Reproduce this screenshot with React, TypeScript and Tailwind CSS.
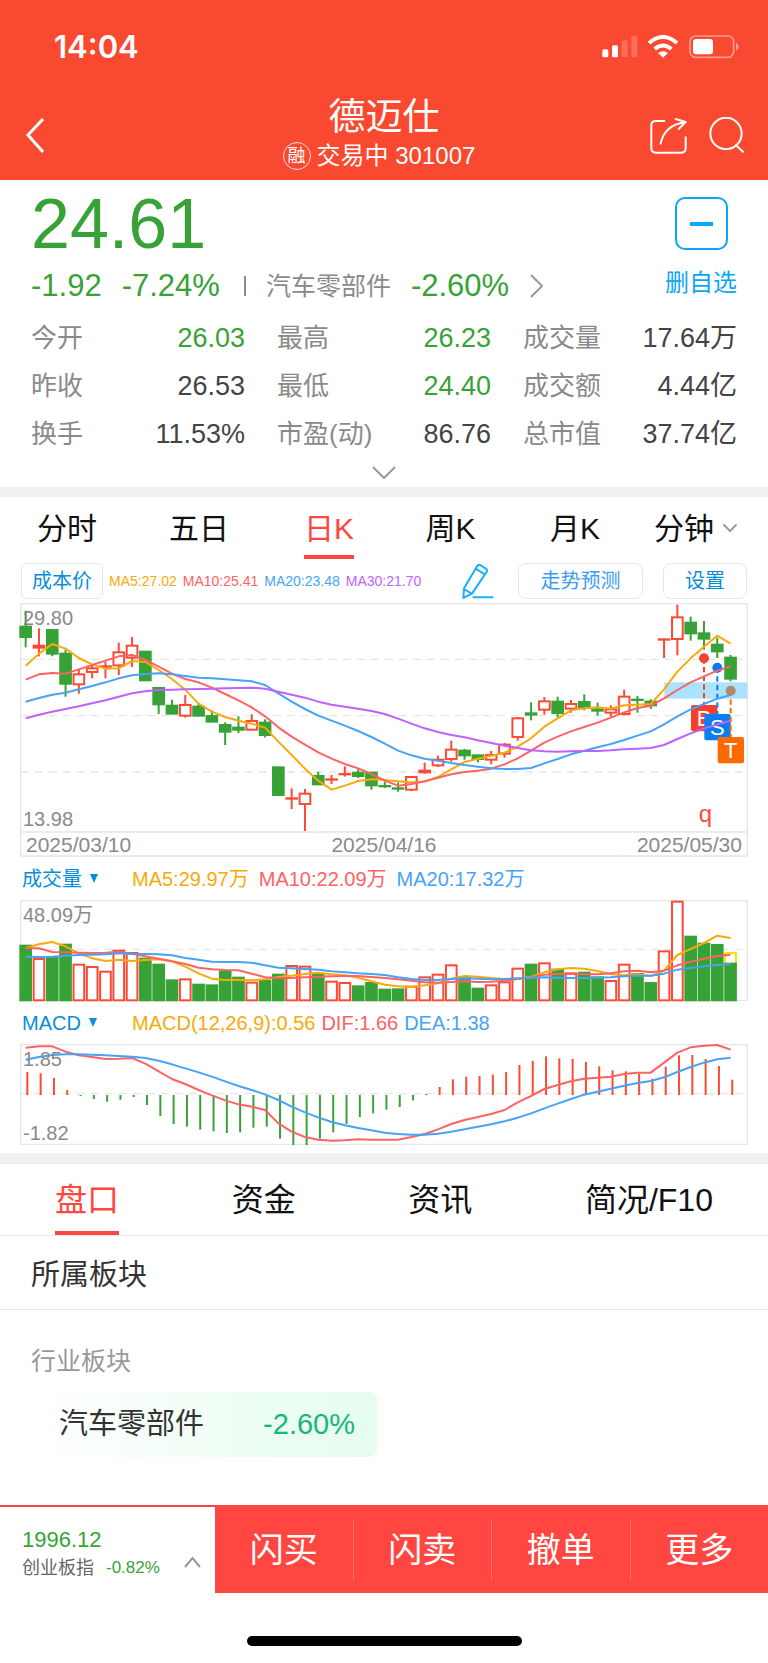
import { ChevronDown } from "lucide-react";

type Candle = ["r" | "g", number, number, number, number];

const RED = "#fb4a35";
const GREEN = "#37a337";
const ORANGE = "#f9a90b";
const PINK = "#ff6262";
const BLUE = "#46a3f8";
const PURPLE = "#bd62ff";

//direction, wick top, body top, body bottom, wick bottom
const candles: Candle[] = [
  ["g", 47, 93, 128, 157], ["r", 100, 150, 160, 184], ["g", 103, 103, 178, 184],
  ["g", 164, 174, 268, 305], ["r", 225, 236, 270, 296], ["r", 213, 218, 233, 250],
  ["r", 200, 212, 216, 250], ["r", 143, 170, 213, 240], ["r", 126, 150, 190, 216],
  ["g", 168, 168, 258, 258], ["g", 277, 277, 330, 357], ["g", 314, 330, 358, 358],
  ["r", 300, 328, 364, 368], ["g", 325, 333, 364, 364], ["g", 346, 361, 382, 382],
  ["g", 382, 388, 412, 450], ["g", 364, 396, 406, 414], ["r", 358, 376, 406, 406],
  ["g", 373, 381, 422, 427], ["g", 515, 515, 602, 602], ["r", 580, 608, 611, 642],
  ["r", 582, 594, 629, 708], ["g", 530, 541, 570, 570], ["r", 540, 551, 555, 567],
  ["r", 514, 535, 538, 545], ["g", 521, 531, 545, 549], ["g", 531, 531, 573, 584],
  ["g", 560, 571, 576, 579], ["g", 562, 578, 583, 590], ["r", 544, 544, 586, 588],
  ["r", 503, 525, 534, 536], ["r", 482, 492, 513, 516], ["r", 437, 462, 494, 500],
  ["g", 462, 465, 483, 494], ["g", 478, 479, 494, 502], ["r", 468, 478, 496, 508],
  ["r", 444, 447, 478, 488], ["r", 366, 368, 428, 437], ["g", 322, 353, 361, 376],
  ["r", 306, 317, 346, 359], ["g", 305, 318, 356, 367], ["r", 315, 325, 343, 353],
  ["g", 298, 319, 341, 346], ["g", 323, 341, 349, 362], ["r", 331, 341, 355, 365],
  ["r", 284, 303, 359, 361], ["g", 303, 312, 316, 353], ["g", 313, 318, 333, 342],
  ["r", 131, 131, 135, 189], ["r", 29, 65, 134, 181], ["g", 65, 81, 117, 137],
  ["g", 78, 113, 133, 164], ["g", 128, 147, 171, 189], ["g", 180, 186, 253, 259],
];

const ma5 = [212, 176, 147, 161, 189, 208, 221, 220, 198, 201, 225, 252, 284, 326, 350, 366, 377, 386, 398, 440, 480, 521, 557, 584, 572, 558, 553, 555, 559, 562, 560, 546, 523, 501, 491, 482, 473, 455, 430, 395, 370, 346, 340, 337, 341, 331, 329, 327, 283, 230, 190, 155, 122, 146];
const ma10 = [254, 238, 234, 236, 223, 210, 197, 184, 180, 195, 215, 236, 252, 262, 278, 297, 316, 337, 364, 397, 425, 449, 472, 491, 507, 520, 537, 557, 572, 567, 559, 548, 538, 531, 527, 521, 508, 490, 467, 443, 425, 409, 396, 383, 368, 352, 339, 332, 310, 285, 262, 244, 227, 215];
const ma20 = [320, 309, 299, 293, 283, 273, 262, 250, 241, 237, 235, 238, 243, 248, 250, 253, 256, 259, 270, 295, 320, 342, 362, 377, 392, 408, 426, 446, 467, 481, 491, 497, 504, 510, 515, 520, 522, 522, 519, 505, 492, 478, 467, 457, 447, 435, 422, 409, 388, 364, 343, 327, 311, 300];
const ma30 = [370, 359, 350, 342, 334, 325, 316, 305, 295, 289, 285, 284, 283, 282, 281, 280, 279, 278, 281, 290, 299, 308, 320, 329, 335, 341, 348, 357, 371, 386, 400, 411, 420, 427, 436, 444, 452, 459, 466, 469, 470, 469, 468, 468, 466, 463, 461, 459, 450, 432, 415, 401, 388, 377];

const volumes = [255, 295, 290, 252, 312, 319, 333, 270, 277, 294, 312, 359, 356, 372, 374, 333, 351, 366, 360, 342, 316, 318, 340, 363, 367, 377, 367, 387, 386, 378, 350, 342, 314, 352, 384, 374, 365, 324, 312, 308, 327, 338, 336, 350, 361, 312, 340, 367, 272, 123, 228, 249, 253, 309];
const vol5 = [264, 253, 246, 259, 280, 295, 303, 299, 303, 300, 298, 304, 320, 340, 356, 360, 359, 361, 358, 351, 347, 342, 338, 343, 346, 353, 364, 374, 379, 381, 376, 370, 356, 348, 350, 354, 357, 357, 350, 337, 328, 324, 326, 333, 343, 346, 343, 348, 332, 285, 267, 249, 227, 234];
const vol10 = [265, 265, 276, 277, 278, 279, 278, 275, 281, 289, 296, 304, 312, 323, 328, 330, 331, 341, 352, 354, 354, 352, 350, 349, 348, 348, 351, 354, 358, 362, 367, 368, 366, 364, 366, 365, 362, 357, 352, 344, 341, 342, 343, 343, 340, 334, 332, 337, 332, 316, 305, 296, 288, 284];
const vol20 = [290, 291, 290, 287, 285, 284, 283, 280, 282, 282, 283, 286, 294, 299, 305, 306, 306, 308, 316, 323, 325, 327, 329, 334, 337, 340, 342, 345, 352, 357, 360, 360, 357, 355, 356, 358, 357, 355, 353, 352, 353, 354, 354, 353, 352, 349, 347, 347, 341, 329, 324, 319, 315, 313];

const macd = [636, 640, 654, 690, 708, 717, 725, 719, 711, 735, 768, 792, 800, 809, 814, 819, 817, 803, 800, 836, 855, 855, 836, 817, 792, 771, 760, 749, 741, 721, 702, 681, 658, 650, 648, 644, 636, 615, 603, 589, 595, 597, 606, 619, 631, 634, 642, 656, 620, 586, 585, 597, 618, 659];
const dif = [563, 559, 559, 575, 586, 591, 597, 596, 594, 611, 634, 657, 672, 690, 706, 721, 733, 740, 750, 790, 815, 831, 839, 842, 841, 838, 839, 839, 839, 831, 822, 808, 792, 780, 771, 762, 750, 727, 708, 687, 675, 664, 656, 653, 650, 642, 638, 638, 608, 578, 562, 557, 555, 569];
const dea = [599, 591, 585, 583, 583, 584, 586, 588, 590, 594, 602, 613, 625, 637, 650, 664, 678, 690, 703, 720, 740, 757, 772, 786, 796, 804, 811, 818, 822, 824, 824, 821, 815, 808, 800, 793, 784, 773, 760, 745, 731, 717, 704, 695, 686, 677, 669, 663, 652, 636, 621, 608, 598, 593];

const stats = [
  { label: "今开", value: "26.03", down: true },
  { label: "最高", value: "26.23", down: true },
  { label: "成交量", value: "17.64万", down: false },
  { label: "昨收", value: "26.53", down: false },
  { label: "最低", value: "24.40", down: true },
  { label: "成交额", value: "4.44亿", down: false },
  { label: "换手", value: "11.53%", down: false },
  { label: "市盈(动)", value: "86.76", down: false },
  { label: "总市值", value: "37.74亿", down: false },
];

const periods = ["分时", "五日", "日K", "周K", "月K", "分钟"];
const sections = ["盘口", "资金", "资讯", "简况/F10"];
const actions = ["闪买", "闪卖", "撤单", "更多"];

const cx = (i: number) => 77 + i * 39.9;

function Line({ data, color }: { data: number[]; color: string }) {
  return (
    <polyline
      points={data.map((y, i) => `${cx(i)},${y}`).join(" ")}
      fill="none"
      stroke={color}
      strokeWidth={6}
      strokeLinejoin="round"
    />
  );
}

function Grid({ y }: { y: number }) {
  return <path d={`M62 ${y}H2242`} stroke="#e6e6e6" strokeWidth={4} strokeDasharray="24 18" />;
}

function Marker({ x, dot, top, color, dotColor, letter }: { x: number; dot: number; top: number; color: string; dotColor: string; letter: string }) {
  return (
    <g>
      <path d={`M${x} ${dot}V${top}`} stroke={color} strokeWidth={6} strokeDasharray="16 10" />
      <circle cx={x} cy={dot} r={15} fill={dotColor} />
      <rect x={x - 39} y={top} width={79} height={79} rx={6} fill={color} />
      <text x={x} y={top + 62} fontSize={66} textAnchor="middle" fill="#fff">
        {letter}
      </text>
    </g>
  );
}

function PriceChart() {
  return (
    <div className="relative mx-5 text-xl leading-6 text-[#8a8a8a]">
      <svg viewBox="60 24 2184 762" className="block w-full overflow-visible">
        <path d="M62 26H2242V783H62ZM62 711H2242" fill="none" stroke="#e6e6e6" strokeWidth={4} />
        <Grid y={193} />
        <Grid y={362} />
        <Grid y={531} />
        <rect x={1993} y={262} width={249} height={49} fill="#abe2fd" />
        {candles.map(([dir, high, top, bottom, low], i) => (
          <g key={i} stroke={dir === "r" ? RED : GREEN} strokeWidth={6}>
            <path d={`M${cx(i)} ${high}V${low}`} />
            <rect
              x={cx(i) - 16}
              y={top + 2}
              width={32}
              height={Math.max(bottom - top - 4, 1)}
              fill={dir === "r" ? "#fff" : GREEN}
            />
          </g>
        ))}
        <Marker x={2112} dot={190} top={330} color="#f9402f" dotColor="#f9402f" letter="B" />
        <Marker x={2152} dot={218} top={357} color="#0a7df2" dotColor="#0a7df2" letter="S" />
        <Marker x={2192} dot={287} top={426} color="#ff6a00" dotColor="#b08b67" letter="T" />
        <Line data={ma5} color={ORANGE} />
        <Line data={ma10} color={PINK} />
        <Line data={ma20} color={BLUE} />
        <Line data={ma30} color={PURPLE} />
        <text x={2116} y={681} fontSize={72} textAnchor="middle" fill={RED}>
          q
        </text>
      </svg>
      <span className="absolute top-[3px] left-[3px]">29.80</span>
      <span className="absolute bottom-6 left-[3px] pb-0.5">13.98</span>
      <div className="absolute inset-x-0 bottom-0 flex justify-between px-1.5 text-[21px]">
        <span>2025/03/10</span>
        <span>2025/04/16</span>
        <span>2025/05/30</span>
      </div>
    </div>
  );
}

function VolumeChart() {
  return (
    <div className="relative mx-5 text-xl leading-6 text-[#8a8a8a]">
      <svg viewBox="60 120 2184 303" className="block w-full overflow-visible">
        <path d="M62 122H2242V421H62Z" fill="none" stroke="#e6e6e6" strokeWidth={4} />
        <Grid y={268} />
        <rect x={cx(53) - 16} y={279} width={32} height={40} fill="#fff" stroke="#ffe100" strokeWidth={6} />
        {volumes.map((top, i) => {
          const up = candles[i][0] === "r";
          return (
            <rect
              key={i}
              x={cx(i) - 16}
              y={top + 2}
              width={32}
              height={419 - top}
              fill={up ? "#fff" : GREEN}
              stroke={up ? RED : GREEN}
              strokeWidth={6}
            />
          );
        })}
        <Line data={vol5} color={ORANGE} />
        <Line data={vol10} color={PINK} />
        <Line data={vol20} color={BLUE} />
      </svg>
      <span className="absolute top-[3px] left-[3px]">48.09万</span>
    </div>
  );
}

function MacdChart() {
  return (
    <div className="relative mx-5 mb-2 text-xl leading-6 text-[#8a8a8a]">
      <svg viewBox="60 552 2184 303" className="block w-full overflow-visible">
        <path d="M62 554H2242V853H62Z" fill="none" stroke="#e6e6e6" strokeWidth={4} />
        <Grid y={701} />
        {macd.map((end, i) => (
          <path key={i} d={`M${cx(i) + 5} 705V${end}`} stroke={end < 705 ? RED : GREEN} strokeWidth={6} />
        ))}
        <Line data={dif} color={PINK} />
        <Line data={dea} color={BLUE} />
      </svg>
      <span className="absolute top-[3px] left-[3px]">1.85</span>
      <span className="absolute bottom-0 left-[3px]">-1.82</span>
    </div>
  );
}

function StatusIcons() {
  return (
    <svg viewBox="35 32 411 72" className="h-6 w-[137px]" fill="#fff">
      <rect x="36" y="75" width="18" height="24" rx="5" />
      <rect x="65" y="63" width="18" height="36" rx="5" />
      <rect x="94" y="48" width="18" height="51" rx="5" opacity=".2" />
      <rect x="123" y="34" width="18" height="65" rx="5" opacity=".2" />
      <g fill="none" stroke="#fff" strokeWidth="12">
        <path d="M176 56Q218 20 260 56" />
        <path d="M193 74Q218 53 243 74" />
      </g>
      <path d="M203 86Q218 76 233 86L218 100Z" />
      <rect x="299" y="35" width="131" height="64" rx="17" fill="none" stroke="#fff" strokeWidth="5" opacity=".45" />
      <rect x="308" y="44" width="60" height="46" rx="9" />
      <path d="M437 55Q445 58 445 67Q445 76 437 79Z" opacity=".5" />
    </svg>
  );
}

function Header() {
  return (
    <header className="bg-[#f94930] text-white">
      <div className="flex h-[94px] items-center justify-between pr-[29px] pl-[54px]">
        <span className="font-['Inter'] text-[31px] font-semibold">14:04</span>
        <StatusIcons />
      </div>
      <div className="grid grid-cols-[1fr_auto_1fr] items-center px-6 pt-1 pb-2">
        <button aria-label="返回">
          <svg viewBox="0 0 20 36" className="h-9 w-5" fill="none" stroke="currentColor" strokeWidth="3">
            <path d="M19 2L4 18L19 35" />
          </svg>
        </button>
        <div className="flex flex-col items-center gap-0.5">
          <h1 className="text-[37px] leading-10">德迈仕</h1>
          <p className="flex h-8 items-center gap-1.5 pr-2.5 text-2xl leading-8">
            <span className="flex size-7 items-center justify-center rounded-full border border-white/80 text-lg">融</span>
            <span>交易中 301007</span>
          </p>
        </div>
        <div className="flex items-center justify-end gap-[22px]">
          <button aria-label="分享">
            <svg viewBox="185 276 111 111" className="size-[37px]" fill="none" stroke="currentColor" strokeWidth="6" strokeLinecap="round" strokeLinejoin="round">
              <path d="M228 288H202Q189 288 189 301V370Q189 383 202 383H279Q292 383 292 370V337" />
              <path d="M217 356Q228 301 290 292M262 282L292 291L271 312" />
            </svg>
          </button>
          <button aria-label="搜索">
            <svg viewBox="361 276 105 107" className="h-9 w-[35px]" fill="none" stroke="currentColor" strokeWidth="6" strokeLinecap="round">
              <circle cx="412" cy="325" r="47" />
              <path d="M442 360L463 380" />
            </svg>
          </button>
        </div>
      </div>
    </header>
  );
}

function Quote() {
  return (
    <section className="px-[31px] pt-3">
      <div className="flex justify-between">
        <div>
          <div className="text-[70px] leading-16 text-[#37a337]">24.61</div>
          <div className="mt-4 flex items-center gap-5 text-[31px] leading-7 text-[#37a337]">
            <span>-1.92</span>
            <span>-7.24%</span>
            <span className="ml-1 h-5 w-0.5 bg-[#8a8a8a]" />
            <a href="#industry" className="flex items-center gap-5">
              <span className="text-[25px] text-[#8a8a8a]">汽车零部件</span>
              <span>-2.60%</span>
              <svg viewBox="0 0 14 24" className="h-6 w-3.5" fill="none" stroke="#9a9a9a" strokeWidth="2">
                <path d="M2 1L13 12L2 23" />
              </svg>
            </a>
          </div>
        </div>
        <button className="flex flex-col items-center pt-[5px] text-[#0aa6fb]">
          <span className="flex size-[53px] items-center justify-center rounded-[10px] border-2 border-current">
            <span className="h-1 w-[23px] bg-current" />
          </span>
          <span className="mt-[19px] text-2xl leading-7">删自选</span>
        </button>
      </div>
      <dl className="mt-[14px] grid grid-cols-3 gap-x-8">
        {stats.map((s) => (
          <div key={s.label} className="flex h-12 items-center justify-between leading-8">
            <dt className="text-[26px] text-[#8a8a8a]">{s.label}</dt>
            <dd className={s.down ? "text-[27px] text-[#37a337]" : "text-[27px] text-[#444]"}>{s.value}</dd>
          </div>
        ))}
      </dl>
      <button aria-label="展开" className="flex h-[29px] w-full items-center justify-center text-[#9a9a9a]">
        <svg viewBox="0 0 24 14" className="h-3.5 w-6" fill="none" stroke="currentColor" strokeWidth="2">
          <path d="M1 1L12 12L23 1" />
        </svg>
      </button>
    </section>
  );
}

function Chart() {
  return (
    <section className="border-t-10 border-[#f1f1f1]">
      <nav className="grid grid-cols-[130fr_134fr_126fr_117fr_132fr_114fr] pr-[13px] pl-0.5 text-[30px] text-[#111]">
        {periods.map((p) => (
          <button key={p} className="flex h-[62px] items-center justify-center gap-1">
            <span
              className={
                p === "日K"
                  ? "h-full border-b-4 border-[#ff4640] pt-1.5 leading-[52px] text-[#ff4640]"
                  : "h-full pt-1.5 leading-[52px]"
              }
            >
              {p}
            </span>
            {p === "分钟" && <ChevronDown className="size-6 text-[#9a9a9a]" />}
          </button>
        ))}
      </nav>
      <div className="flex items-center px-[21px] py-1 text-xl">
        <button className="h-9 w-[82px] rounded-md border border-[#e6e6e6] text-[#078edb]">成本价</button>
        <p className="ml-1.5 flex gap-1.5 text-sm whitespace-nowrap">
          <span className="text-[#f9a90b]">MA5:27.02</span>
          <span className="text-[#ff6262]">MA10:25.41</span>
          <span className="text-[#46a3f8]">MA20:23.48</span>
          <span className="text-[#bd62ff]">MA30:21.70</span>
        </p>
        <button aria-label="画线" className="ml-auto">
          <svg viewBox="37 40 94 105" className="h-9 w-8" fill="none" stroke="#1ab0fb" strokeWidth="6" strokeLinejoin="round">
            <path d="M41 142L43 114L81 49Q85 43 91 46L107 56Q113 60 109 66L67 129ZM77 56L104 73M43 116L66 130M68 140H129" />
          </svg>
        </button>
        <button className="ml-6 h-9 w-[125px] rounded-lg border border-[#e6e6e6] text-[#3d9cf0]">走势预测</button>
        <button className="ml-5 h-9 w-[84px] rounded-lg border border-[#e6e6e6] text-[#078edb]">设置</button>
      </div>
      <PriceChart />
      <div className="flex h-[43px] items-center pl-[22px] text-xl whitespace-nowrap">
        <button className="flex w-[110px] items-center gap-2 text-[#078edb]">
          成交量
          <svg viewBox="0 0 8 9" className="h-[9px] w-2" fill="currentColor"><path d="M0 0H8L4 9Z" /></svg>
        </button>
        <p className="flex gap-2.5">
          <span className="text-[#f9a90b]">MA5:29.97万</span>
          <span className="text-[#ff6262]">MA10:22.09万</span>
          <span className="text-[#46a3f8]">MA20:17.32万</span>
        </p>
      </div>
      <VolumeChart />
      <div className="flex h-[43px] items-center pl-[22px] text-xl whitespace-nowrap">
        <button className="flex w-[110px] items-center gap-2 text-[#078edb]">
          MACD
          <svg viewBox="0 0 8 9" className="h-[9px] w-2" fill="currentColor"><path d="M0 0H8L4 9Z" /></svg>
        </button>
        <p className="flex gap-1.5">
          <span className="text-[#f9a90b]">MACD(12,26,9):0.56</span>
          <span className="text-[#ff6262]">DIF:1.66</span>
          <span className="text-[#46a3f8]">DEA:1.38</span>
        </p>
      </div>
      <MacdChart />
    </section>
  );
}

function Sectors() {
  return (
    <section className="border-t-10 border-[#f1f1f1]">
      <nav className="flex justify-between border-y border-[#e9e9e9] px-[55px] text-[32px] text-[#111]">
        {sections.map((s) => (
          <button
            key={s}
            className={
              s === "盘口"
                ? "h-[71px] border-b-4 border-[#ff4640] pt-1 text-[#ff4640]"
                : "h-[71px] border-b-4 border-transparent pt-1"
            }
          >
            {s}
          </button>
        ))}
      </nav>
      <h2 className="flex h-[74px] items-center border-b border-[#e6e6e6] px-[31px] pt-1.5 text-[29px] text-[#333]">所属板块</h2>
      <div className="px-[31px] pt-[33px] pb-12">
        <h3 className="text-[25px] leading-9 text-[#999]">行业板块</h3>
        <a
          id="industry"
          href="#industry"
          className="mt-[13px] flex h-[65px] w-[346px] items-center justify-between rounded-lg bg-linear-to-r from-white to-[#e4fdee] pr-[22px] pl-7"
        >
          <span className="text-[29px] text-[#333]">汽车零部件</span>
          <span className="text-[29px] text-[#17b877]">-2.60%</span>
        </a>
      </div>
    </section>
  );
}

function TradeBar() {
  return (
    <footer>
      <div className="flex h-[88px] border-t-2 border-[#ff4640]">
        <button className="flex w-[215px] items-center justify-between pr-3.5 pl-[22px] text-left">
          <span className="pt-2">
            <span className="block text-[22px] leading-7 text-[#37a337]">1996.12</span>
            <span className="flex items-center gap-3 leading-7">
              <span className="text-lg leading-7 text-[#666]">创业板指</span>
              <span className="text-[17px] text-[#37a337]">-0.82%</span>
            </span>
          </span>
          <svg viewBox="0 0 17 12" className="mt-6 h-3 w-[17px]" fill="none" stroke="#999" strokeWidth="2">
            <path d="M1 11L8.500 2L16 11" />
          </svg>
        </button>
        <div className="flex flex-1 divide-x divide-white/20 bg-[#ff4640] py-3 text-[34px] text-white">
          {actions.map((a) => (
            <button key={a} className="flex-1">
              {a}
            </button>
          ))}
        </div>
      </div>
      <div className="flex justify-center pt-[43px] pb-[17px]">
        <div className="h-2.5 w-[275px] rounded-full bg-black" />
      </div>
    </footer>
  );
}

export default function App() {
  return (
    <div className="bg-white font-['Liberation_Sans','Noto_Sans_CJK_SC',sans-serif]">
      <Header />
      <Quote />
      <Chart />
      <Sectors />
      <TradeBar />
    </div>
  );
}
